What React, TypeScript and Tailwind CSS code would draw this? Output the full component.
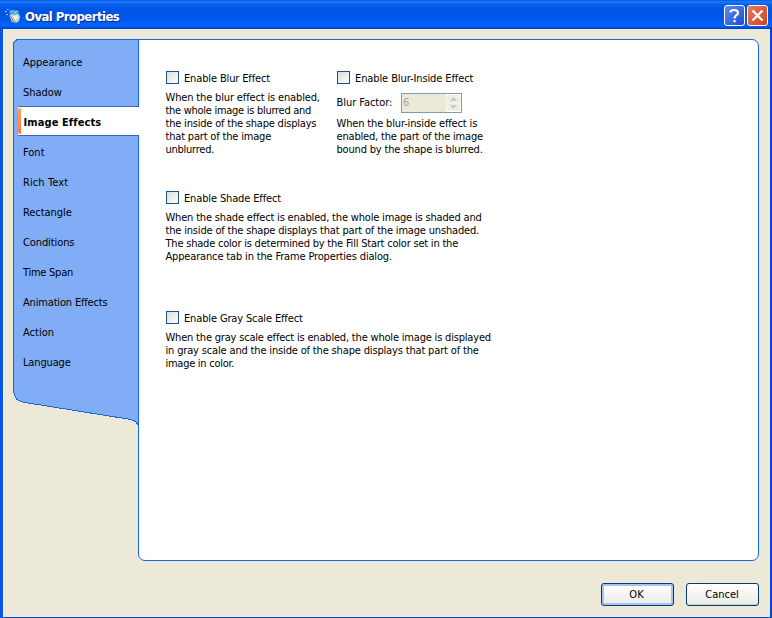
const navItems = [
  { label: "Appearance", cls: "" },
  { label: "Shadow", cls: "tracking-[-0.05px]" },
  { label: "Image Effects", cls: "tracking-[0.1px]" },
  { label: "Font", cls: "" },
  { label: "Rich Text", cls: "tracking-[0.1px]" },
  { label: "Rectangle", cls: "tracking-[-0.05px]" },
  { label: "Conditions", cls: "tracking-[-0.1px]" },
  { label: "Time Span", cls: "tracking-[-0.25px]" },
  { label: "Animation Effects", cls: "tracking-[-0.17px]" },
  { label: "Action", cls: "" },
  { label: "Language", cls: "tracking-[-0.15px]" },
];

type LineProps = { text: string; cls?: string };

function Lines({ lines }: { lines: LineProps[] }) {
  return (
    <div className="-ml-[0.5px] mt-[7px] leading-[13px]">
      {lines.map((l) => (
        <div key={l.text} className={"whitespace-nowrap " + (l.cls ?? "")}>
          {l.text}
        </div>
      ))}
    </div>
  );
}

function Check({ label, cls = "tracking-[-0.14px]" }: { label: string; cls?: string }) {
  return (
    <label className="flex h-[13px] items-center">
      <span className="h-[13px] w-[13px] shrink-0 border border-[#1c5180] bg-linear-to-br from-[#dcdcd7] to-white" />
      <span className={"ml-[5px] whitespace-nowrap pt-[2px] leading-[13px] " + cls}>{label}</span>
    </label>
  );
}

export default function App() {
  return (
    <div className="flex h-[618px] w-[772px] flex-col overflow-hidden bg-[#ece9d8] font-['DejaVu_Sans_Condensed','DejaVu_Sans',sans-serif] text-[11px] text-black [font-stretch:75%]">
      <header className="flex h-[29px] shrink-0 items-center bg-[linear-gradient(180deg,#0058e6_0%,#1a74f5_5%,#1672f4_9%,#0560ea_16%,#0056e4_28%,#0054e3_50%,#005cf5_75%,#0066ff_88%,#0050dd_96%,#0038b8_100%)] pt-[2px]">
        <svg className="ml-[5px] h-4 w-4" viewBox="0 0 16 16">
          <path d="M4 7L7 6L14 6L15 9L14 13L11 15L7 14Z" fill="#c9cfd0" />
          <path d="M8 8L12 7L13 10L10 12Z" fill="#f3f4f1" />
          <path d="M5 2L9 2L14 4L13 6L9 7L4 5Z" fill="#3db4e6" />
          <path d="M4 7L7 10L8 13L11 14.500" stroke="#8d8064" fill="none" />
          <path d="M0 3.500h2M2 1.500h1.500M1 6.500h2" stroke="#71d5ff" />
          <path d="M9 5L13 2.500" stroke="#e8d68a" />
        </svg>
        <h1 className="ml-[4px] grow pt-[2px] text-[13px] font-bold leading-4 tracking-[-0.55px] text-white [text-shadow:1px_1px_#0a2a8a]">Oval Properties</h1>
        <div className="mr-[4px] flex gap-[2px]">
          <button className="flex h-[21px] w-[21px] items-center justify-center rounded-[3px] border border-white bg-linear-to-br from-[#5e8df0] to-[#1b48cf]">
            <svg width="19" height="19" viewBox="0 0 19 19" fill="none" stroke="white" strokeWidth="2.200">
              <path d="M5.500 6.500Q5.500 4 9 4Q13 4 13 6.800Q13 8.500 11 9.500Q9.500 10.500 9.500 12.500M9.500 14V16.200" />
            </svg>
          </button>
          <button className="flex h-[21px] w-[21px] items-center justify-center rounded-[3px] border border-white bg-linear-to-br from-[#ea7a5c] to-[#d2400f]">
            <svg width="19" height="19" viewBox="0 0 19 19" stroke="white" strokeWidth="2.400">
              <path d="M4.500 4.500L14.500 14.500M14.500 4.500L4.500 14.500" />
            </svg>
          </button>
        </div>
      </header>
      <div className="flex grow flex-col border-b border-l-3 border-r-2 border-b-[#0a4fd8] border-l-[#0a55e6] border-r-[#0045e0] pl-[10px] pr-[11px] pt-[10px] shadow-[inset_1px_0_#f4f1e4]">
        <main className="flex h-[522px] shrink-0">
          <nav className="relative w-[125px] pt-[7px]">
            <svg className="absolute left-0 top-0" width="126" height="390" viewBox="0 0 126 390" fill="none">
              <path d="M.5 5.500Q1 1 5.500 .5H125.500V389C125.500 385 123 382 118 380.500L12 363.500Q4 362 2.500 358.500Q.5 354 .5 350Z" fill="#80adf5" stroke="#1466dd" shapeRendering="crispEdges" />
            </svg>
            {navItems.map((item) =>
              item.label === "Image Effects" ? (
                <div key={item.label} className="relative -mr-px ml-[5px] flex h-[30px] items-center border-y border-[#3a66ad] bg-white font-bold">
                  <span className="h-[26px] w-[3px] rounded-l-[2px] bg-linear-to-b from-[#ffa25c] to-[#ff783c]" />
                  <span className={"ml-[2.5px] whitespace-nowrap pt-[4px] " + item.cls}>{item.label}</span>
                </div>
              ) : (
                <div key={item.label} className="relative flex h-[30px] items-center pl-[10px] pt-[4px]">
                  <span className={"whitespace-nowrap " + item.cls}>{item.label}</span>
                </div>
              )
            )}
          </nav>
          <section className="grow rounded-[7px] rounded-tl-none border border-[#1466dd] bg-white pl-[27px] pt-[31px]">
            <div className="flex h-[120px]">
              <div className="w-[171px]">
                <Check label="Enable Blur Effect" />
                <Lines
                  lines={[
                    { text: "When the blur effect is enabled,", cls: "tracking-[-0.15px]" },
                    { text: "the whole image is blurred and", cls: "tracking-[-0.28px]" },
                    { text: "the inside of the shape displays", cls: "tracking-[-0.2px]" },
                    { text: "that part of the image", cls: "tracking-[-0.18px]" },
                    { text: "unblurred.", cls: "tracking-[-0.25px]" },
                  ]}
                />
              </div>
              <div>
                <Check label="Enable Blur-Inside Effect" cls="tracking-[-0.1px]" />
                <div className="mt-[9px] flex h-5 items-center">
                  <span className="-ml-[0.5px] w-[64.5px] whitespace-nowrap tracking-[-0.05px]">Blur Factor:</span>
                  <div className="flex h-5 w-[61px] items-center border border-[#7f9db9] bg-[#ece9d8] pl-px text-[#aca899]">
                    <span className="grow">6</span>
                    <svg width="15" height="18" viewBox="0 0 15 18">
                      <rect width="15" height="18" fill="#fff" />
                      <rect x=".5" y="1" width="14" height="16" rx="2" fill="#efeee5" />
                      <path d="M0 9H15" stroke="#f8f7f1" />
                      <path d="M4 7L7.500 3L11 7ZM4 11L7.500 15L11 11Z" fill="#c9c7ba" />
                    </svg>
                  </div>
                </div>
                <div className="-mt-[3px]">
                  <Lines
                    lines={[
                      { text: "When the blur-inside effect is", cls: "tracking-[-0.15px]" },
                      { text: "enabled, the part of the image", cls: "tracking-[-0.18px]" },
                      { text: "bound by the shape is blurred.", cls: "tracking-[-0.18px]" },
                    ]}
                  />
                </div>
              </div>
            </div>
            <div className="h-[120px]">
              <Check label="Enable Shade Effect" />
              <Lines
                lines={[
                  { text: "When the shade effect is enabled, the whole image is shaded and", cls: "tracking-[-0.18px]" },
                  { text: "the inside of the shape displays that part of the image unshaded.", cls: "tracking-[-0.175px]" },
                  { text: "The shade color is determined by the Fill Start color set in the", cls: "tracking-[-0.21px]" },
                  { text: "Appearance tab in the Frame Properties dialog.", cls: "tracking-[-0.16px]" },
                ]}
              />
            </div>
            <div>
              <Check label="Enable Gray Scale Effect" />
              <Lines
                lines={[
                  { text: "When the gray scale effect is enabled, the whole image is displayed", cls: "tracking-[-0.19px]" },
                  { text: "in gray scale and the inside of the shape displays that part of the", cls: "tracking-[-0.16px]" },
                  { text: "image in color.", cls: "tracking-[-0.27px]" },
                ]}
              />
            </div>
          </section>
        </main>
        <footer className="mt-[22px] flex justify-end gap-3">
          <button className="h-[23px] w-[73px] rounded-[3px] border border-[#003c74] bg-linear-to-b from-white to-[#ecebe5] pr-[2px] pt-[2px] shadow-[inset_0_0_0_2px_#a7c2f3,inset_0_-2px_#7090e8]">OK</button>
          <button className="h-[23px] w-[73px] rounded-[3px] border border-[#003c74] bg-linear-to-b from-white to-[#ecebe5] pr-px pt-[2px] shadow-[inset_0_-1px_#d6d0c5]">Cancel</button>
        </footer>
      </div>
    </div>
  );
}
